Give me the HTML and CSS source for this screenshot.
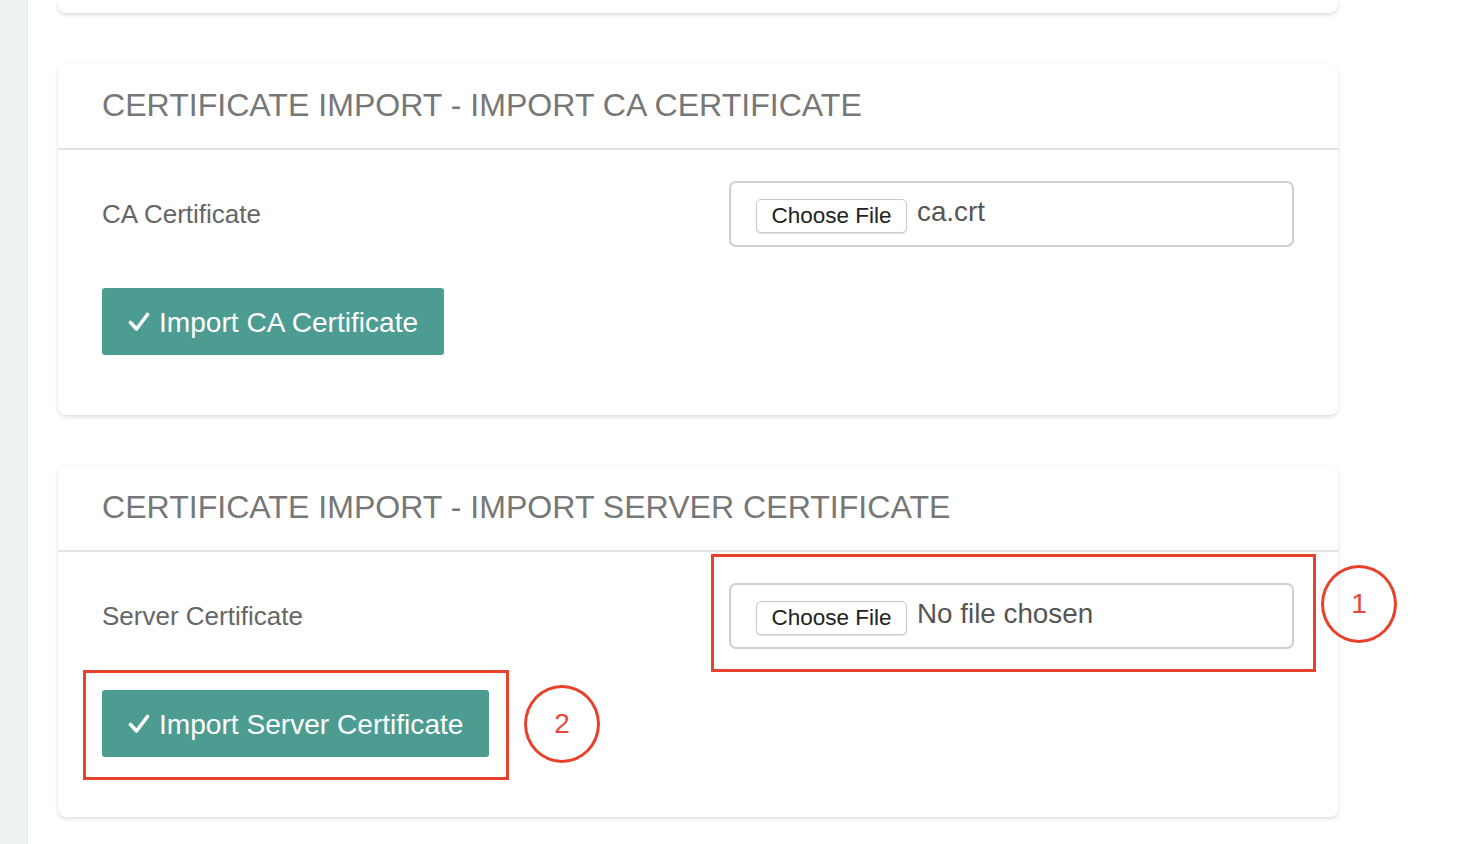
FILE: index.html
```html
<!DOCTYPE html>
<html lang="en">
<head>
<meta charset="utf-8">
<title>Certificate Import</title>
<link rel="stylesheet" href="styles.css">
</head>
<body>
<div class="layout">
  <aside class="sidebar"></aside>
  <main class="main">
    <section class="card card-stub"></section>

    <section class="card">
      <header class="card-header">CERTIFICATE IMPORT - IMPORT CA CERTIFICATE</header>
      <div class="card-body">
        <div class="form-row">
          <div class="form-label">CA Certificate</div>
          <div class="file-box">
            <button class="file-btn" type="button">Choose File</button>
            <span class="file-name">ca.crt</span>
          </div>
        </div>
        <button class="btn-import" type="button">
          <svg class="check" width="22" height="20" viewBox="0 0 22 20"><path d="M2.5 10.5 L8.5 17 L19.5 2.5" fill="none" stroke="#fff" stroke-width="3.6" stroke-linecap="round" stroke-linejoin="round"/></svg>
          <span>Import CA Certificate</span>
        </button>
      </div>
    </section>

    <section class="card">
      <header class="card-header">CERTIFICATE IMPORT - IMPORT SERVER CERTIFICATE</header>
      <div class="card-body">
        <div class="form-row">
          <div class="form-label">Server Certificate</div>
          <div class="file-box">
            <button class="file-btn" type="button">Choose File</button>
            <span class="file-name">No file chosen</span>
          </div>
        </div>
        <button class="btn-import" type="button">
          <svg class="check" width="22" height="20" viewBox="0 0 22 20"><path d="M2.5 10.5 L8.5 17 L19.5 2.5" fill="none" stroke="#fff" stroke-width="3.6" stroke-linecap="round" stroke-linejoin="round"/></svg>
          <span>Import Server Certificate</span>
        </button>
      </div>
    </section>
  </main>
</div>

<div class="annot-rect annot-rect-1"></div>
<div class="annot-rect annot-rect-2"></div>
<div class="annot-circle annot-circle-1">1</div>
<div class="annot-circle annot-circle-2">2</div>
</body>
</html>
```

FILE: styles.css
```css
* { box-sizing: border-box; }

html, body {
  margin: 0;
  padding: 0;
  height: 844px;
  overflow: hidden;
  background: #ffffff;
  font-family: "Liberation Sans", Arial, Helvetica, sans-serif;
}

.layout {
  display: flex;
  height: 844px;
}

.sidebar {
  width: 28px;
  flex: none;
  background: #eef2f3;
  border-right: 1px solid #e6eaeb;
}

.main {
  flex: none;
  width: 1280px;
  margin-left: 30px;
  display: flex;
  flex-direction: column;
  gap: 51px;
}

.card {
  background: #fff;
  border-radius: 8px;
  box-shadow: 0 2px 4px rgba(0, 0, 0, 0.13), 0 0 1px rgba(0, 0, 0, 0.06);
}

.card-stub {
  height: 13px;
  flex: none;
  border-radius: 0 0 8px 8px;
}

.card-header {
  padding: 23px 44px 0;
  height: 86px;
  line-height: 36px;
  font-size: 32.1px;
  color: #777;
  border-bottom: 2px solid #e3e3e3;
}

.card-body {
  padding: 31px 44px 60px;
}

.form-row {
  display: flex;
  align-items: center;
  height: 66px;
}

.form-label {
  width: 627px;
  flex: none;
  font-size: 26px;
  color: #666;
}

.file-box {
  width: 565px;
  height: 66px;
  border: 2px solid #cfcfcf;
  border-radius: 7px;
  display: flex;
  align-items: center;
  padding: 0 0 0 25px;
}

.file-btn {
  height: 34px;
  width: 151px;
  margin-top: 4px;
  padding: 0;
  background: #fff;
  border: 1px solid #c9c9c9;
  border-radius: 5px;
  box-shadow: 0 1px 1px rgba(0, 0, 0, 0.12);
  font-family: "Liberation Sans", Arial, sans-serif;
  font-size: 22.5px;
  color: #222;
}

.file-name {
  margin-left: 10px;
  margin-top: -4px;
  font-size: 27.8px;
  color: #555;
}

.btn-import {
  margin-top: 41px;
  height: 67px;
  padding: 0 26px;
  display: inline-flex;
  align-items: center;
  gap: 9px;
  background: #4d9c91;
  border: none;
  border-radius: 3px;
  color: #fff;
  font-family: "Liberation Sans", Arial, sans-serif;
  font-size: 28.1px;
}

.btn-import span { margin-top: 2px; }

.check { flex: none; margin-top: 1px; }

.annot-rect {
  position: absolute;
  border: 3px solid #e8412c;
}

.annot-rect-1 {
  left: 711px;
  top: 554px;
  width: 605px;
  height: 118px;
}

.annot-rect-2 {
  left: 83px;
  top: 670px;
  width: 426px;
  height: 110px;
}

.annot-circle {
  position: absolute;
  width: 76px;
  height: 78px;
  border: 3px solid #e8412c;
  border-radius: 50%;
  display: flex;
  align-items: center;
  justify-content: center;
  font-size: 28px;
  color: #e8493c;
  font-family: "Liberation Sans", Arial, sans-serif;
}

.annot-circle-1 { left: 1321px; top: 565px; }
.annot-circle-2 { left: 524px; top: 685px; }
```
